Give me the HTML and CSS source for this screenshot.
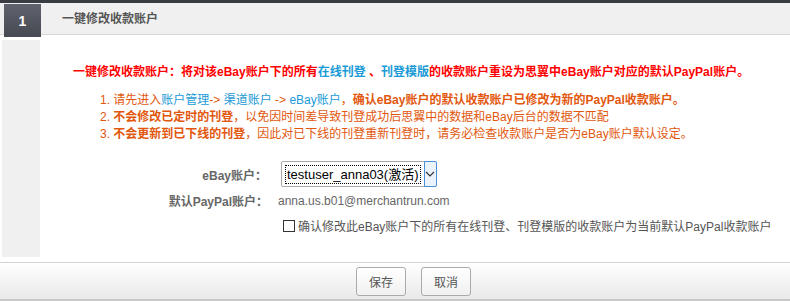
FILE: index.html
```html
<!DOCTYPE html>
<html lang="zh-CN">
<head>
<meta charset="utf-8">
<title>一键修改收款账户</title>
<link rel="stylesheet" href="styles.css">
</head>
<body>
<div class="topbar"></div>
<div class="header">
  <div class="step">1</div>
  <div class="title">一键修改收款账户</div>
</div>
<div class="main">
  <div class="side"></div>
  <div class="content">
    <p class="headline">一键修改收款账户：将对该eBay账户下的所有<span class="link">在线刊登</span> 、<span class="link">刊登模版</span>的收款账户重设为思翼中eBay账户对应的默认PayPal账户。</p>
    <ol class="notes">
      <li>1. 请先进入<span class="link">账户管理</span>-&gt; <span class="link">渠道账户</span> -&gt; <span class="link">eBay账户</span>，<b>确认eBay账户的默认收款账户已修改为新的PayPal收款账户。</b></li>
      <li>2. <b>不会修改已定时的刊登</b>，以免因时间差导致刊登成功后思翼中的数据和eBay后台的数据不匹配</li>
      <li>3. <b>不会更新到已下线的刊登</b>，因此对已下线的刊登重新刊登时，请务必检查收款账户是否为eBay账户默认设定。</li>
    </ol>
    <div class="form">
      <div class="row">
        <div class="label">eBay账户：</div>
        <div class="select">
          <span class="sel-text"><span class="focus">testuser_anna03(激活)</span></span>
          <span class="sel-btn"><svg width="10" height="6" viewBox="0 0 10 6"><path d="M1 1 L5 5 L9 1" fill="none" stroke="#333" stroke-width="1.2"/></svg></span>
        </div>
      </div>
      <div class="row row2">
        <div class="label">默认PayPal账户：</div>
        <div class="value">anna.us.b01@merchantrun.com</div>
      </div>
      <label class="confirm"><span class="box"></span>确认修改此eBay账户下的所有在线刊登、刊登模版的收款账户为当前默认PayPal收款账户</label>
    </div>
  </div>
</div>
<div class="footer">
  <button class="btn">保存</button>
  <button class="btn">取消</button>
</div>
</body>
</html>
```
FILE: styles.css
```css
* { box-sizing: border-box; }
html, body { margin: 0; padding: 0; background: #fff; }
body {
  width: 790px;
  height: 301px;
  overflow: hidden;
  font-family: "Liberation Sans", "Noto Sans CJK SC", sans-serif;
  font-size: 12px;
  color: #555;
}
.topbar { height: 3px; background: #3a3c44; }
.header {
  height: 32px;
  background: #f0f0f0;
  border-bottom: 1px solid #d8d8d8;
  display: flex;
  align-items: flex-start;
}
.step {
  margin-left: 4px;
  margin-top: 1px;
  width: 37px;
  height: 33px;
  background: linear-gradient(#60636d, #464951);
  color: #fff;
  font-weight: bold;
  font-size: 14px;
  display: flex;
  align-items: center;
  justify-content: center;
  position: relative;
  z-index: 1;
}
.title {
  margin-left: 21px;
  line-height: 33px;
  font-size: 12px;
  font-weight: bold;
  color: #555;
}
.main { display: flex; margin-top: 5px; height: 222px; }
.side { width: 38px; margin-left: 2px; height: 217px; background: #f0f0f0; }
.content { flex: 1; padding-top: 24px; }
.headline {
  margin: 0 0 0 33px;
  color: #ff0000;
  font-weight: bold;
  line-height: 17px;
}
.link { color: #1a9ad6; font-weight: normal; }
.headline .link { font-weight: bold; }
.notes {
  list-style: none;
  margin: 11px 0 0 60px;
  padding: 0;
  color: #e2570d;
}
.notes li { line-height: 17px; height: 17px; }
.notes b { font-weight: bold; }
.form { margin-top: 18px; }
.row { display: flex; align-items: center; }
.label {
  width: 233px;
  text-align: right;
  font-weight: bold;
  color: #666;
  padding-right: 6px;
}
.select {
  margin-left: 8px;
  width: 156px;
  height: 26px;
  border: 1px solid #a9a9a9;
  border-radius: 2px;
  display: flex;
  background: #fff;
}
.sel-text {
  flex: 1;
  padding: 3px 3px;
  font-family: "Liberation Sans", "Noto Sans CJK SC", sans-serif;
  font-size: 13px;
  color: #000;
}
.focus {
  display: block;
  border: 1px dotted #000;
  line-height: 17px;
  padding: 0 1px;
  white-space: nowrap;
}
.sel-btn {
  width: 17px;
  border: 1px solid #4a90d9;
  margin: -1px -1px -1px 0;
  border-radius: 0 2px 2px 0;
  background: #eaf3fc;
  display: flex;
  align-items: center;
  justify-content: center;
}
.row2 { margin-top: 5px; }
.row2 .label { padding-right: 5px; }
.value { margin-left: 5px; color: #666; }
.confirm {
  display: flex;
  align-items: center;
  margin: 8px 0 0 243px;
  color: #555;
}
.box {
  width: 12px;
  height: 12px;
  border: 1px solid #333;
  margin-right: 3px;
  background: #fff;
}
.footer {
  height: 39px;
  border-top: 1px solid #d4d4d4;
  border-bottom: 2px solid #c8c8c8;
  background: linear-gradient(#ffffff, #e9e9e9);
  display: flex;
  justify-content: center;
  align-items: center;
  gap: 15px;
  padding-left: 37px;
}
.btn {
  width: 50px;
  height: 29px;
  border: 1px solid #aaa;
  border-radius: 3px;
  background: linear-gradient(#ffffff, #f0f0f0);
  font-family: "Liberation Sans", "Noto Sans CJK SC", sans-serif;
  font-size: 12px;
  color: #555;
  padding: 0;
}
```
